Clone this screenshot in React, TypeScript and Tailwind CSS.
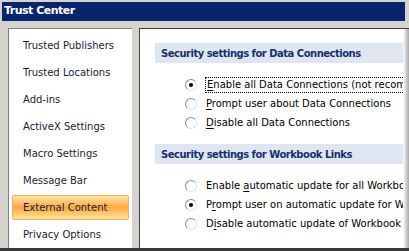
import React from "react";

const navItems = [
  "Trusted Publishers",
  "Trusted Locations",
  "Add-ins",
  "ActiveX Settings",
  "Macro Settings",
  "Message Bar",
  "External Content",
  "Privacy Options",
];

const Radio = ({ checked }: { checked?: boolean }) => (
  <span className="w-[12px] h-[12px] shrink-0 rounded-full bg-white border border-t-[#8a8a8a] border-l-[#8a8a8a] border-b-[#e0e0e0] border-r-[#e0e0e0] flex items-center justify-center">
    {checked && <span className="w-[4px] h-[4px] rounded-full bg-black" />}
  </span>
);

type Opt = { pre: string; key: string; post: string; checked?: boolean; focus?: boolean };

const Group = ({ title, options }: { title: string; options: Opt[] }) => (
  <div className="flex flex-col">
    <div className="ml-[15px] h-[20px] bg-[#dfe6f1] flex items-center pl-[6px] font-bold text-[#15306b] whitespace-nowrap tracking-[-0.5px]">
      {title}
    </div>
    <div className="mt-[12px] flex flex-col pl-[45px]">
      {options.map((o, i) => (
        <div key={i} className="h-[19px] flex items-center gap-[9px] whitespace-nowrap">
          <Radio checked={o.checked} />
          <span
            className={
              o.focus
                ? "border border-dotted border-black px-[1px] -ml-[1px] leading-[14px]"
                : "leading-[14px]"
            }
          >
            {o.pre}
            <span className="underline underline-offset-2">{o.key}</span>
            {o.post}
          </span>
        </div>
      ))}
    </div>
  </div>
);

export default function App() {
  return (
    <div
      className="w-[409px] h-[251px] bg-[#d6d3ce] flex flex-col overflow-hidden text-[10px] text-black"
      style={{ fontFamily: '"DejaVu Sans", sans-serif' }}
    >
      <div className="mt-[2px] ml-[2px] mr-[4px] h-[19px] bg-[#0a246a] flex items-center pl-[2px] text-white font-bold text-[11px] tracking-[-0.5px]">
        Trust Center
      </div>
      <div className="flex-1 flex pt-[7px] pl-[8px] gap-[7px] min-h-0">
        <div className="w-[124px] bg-white border-l border-t border-[#808080] flex flex-col pt-[3px] px-[3px]">
          {navItems.map((n) => (
            <div
              key={n}
              className={
                n === "External Content"
                  ? "h-[25px] my-[1px] shrink-0 flex items-center pl-[10px] rounded-[2px] border border-[#e9b25c] bg-gradient-to-b from-[#fde4a4] via-[#fba942] to-[#ffe595] text-[#1b1b33]"
                  : "h-[27px] shrink-0 flex items-center pl-[11px] text-[#1b1b33]"
              }
            >
              {n}
            </div>
          ))}
        </div>
        <div className="flex-1 relative bg-white border-l border-t border-[#404040] flex flex-col pt-[14px] overflow-hidden">
          <Group
            title="Security settings for Data Connections"
            options={[
              { pre: "", key: "E", post: "nable all Data Connections (not recommended)", checked: true, focus: true },
              { pre: "", key: "P", post: "rompt user about Data Connections" },
              { pre: "", key: "D", post: "isable all Data Connections" },
            ]}
          />
          <div className="mt-[12px]">
            <Group
              title="Security settings for Workbook Links"
              options={[
                { pre: "Enable ", key: "a", post: "utomatic update for all Workbook Links" },
                { pre: "P", key: "r", post: "ompt user on automatic update for Workbook Links", checked: true },
                { pre: "D", key: "i", post: "sable automatic update of Workbook Links" },
              ]}
            />
          </div>
          <div className="absolute top-0 right-0 bottom-0 w-[6px] bg-gradient-to-r from-white to-[#a8a8a8]" />
        </div>
      </div>
      <div className="h-[3px] bg-[#3a3a3a]" />
    </div>
  );
}
